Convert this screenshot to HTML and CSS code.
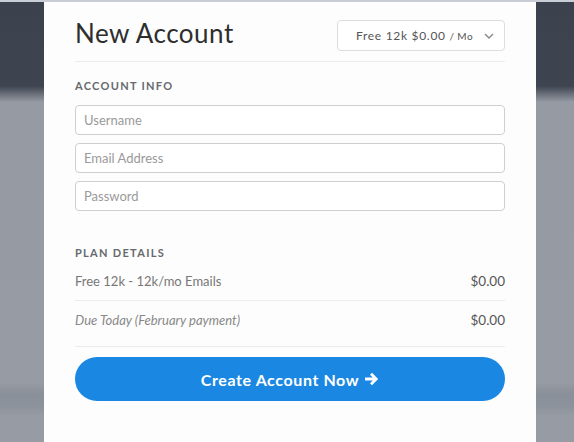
FILE: index.html
```html
<!DOCTYPE html>
<html lang="en">
<head>
    <meta charset="UTF-8">
    <meta name="viewport" content="width=device-width, initial-scale=1.0">
    <title>New Account</title>
    <link rel="stylesheet" href="styles.css">
</head>
<body>
    <div class="backdrop">
        <div class="modal">
            <header class="modal-head">
                <h1>New Account</h1>
                <button class="plan-select">
                    <span class="plan-text">Free 12k $0.00 <small>/ Mo</small></span>
                    <svg class="chevron" width="10" height="6" viewBox="0 0 10 6"><path d="M1 1l4 4 4-4" fill="none" stroke="#888" stroke-width="1.4"/></svg>
                </button>
            </header>

            <section class="section">
                <h2>Account Info</h2>
                <div class="fields">
                    <input type="text" placeholder="Username">
                    <input type="text" placeholder="Email Address">
                    <input type="password" placeholder="Password">
                </div>
            </section>

            <section class="section plan">
                <h2>Plan Details</h2>
                <div class="row">
                    <span>Free 12k - 12k/mo Emails</span>
                    <span class="price">$0.00</span>
                </div>
                <div class="row due">
                    <span class="note">Due Today (February payment)</span>
                    <span class="price">$0.00</span>
                </div>
            </section>

            <button class="create">Create Account Now
                <svg class="arrow" width="15" height="14" viewBox="0 0 15 14"><path d="M1 7h11M7 1.8L12.2 7 7 12.2" fill="none" stroke="#fff" stroke-width="2.8"/></svg>
            </button>
        </div>
    </div>
</body>
</html>
```

FILE: styles.css
```css
:root {
    --blue: #1a87e2;
    --text: #333;
    --muted: #666;
    --line: #ececec;
}

* {
    margin: 0;
    padding: 0;
    box-sizing: border-box;
}

body {
    font-family: Lato, "Open Sans", Arial, sans-serif;
    color: var(--text);
    height: 442px;
    overflow: hidden;
}

.backdrop {
    height: 442px;
    padding: 0 38px 0 44px;
    border-top: 2px solid #c9cdd5;
    background: linear-gradient(to bottom, #3b414d 0, #3e4450 84px, #959aa3 100px, #979ba4 380px, #8a9099 392px, #8d939c 405px, #979ba3 414px);
}

.modal {
    height: 100%;
    background: #fdfdfd;
    padding: 0 31px;
}

.modal-head {
    display: flex;
    justify-content: space-between;
    align-items: center;
    height: 60px;
    padding-top: 8px;
    border-bottom: 1px solid var(--line);
}

h1 {
    font-size: 26px;
    font-weight: 400;
    color: #2e2e2e;
    letter-spacing: 0.5px;
    margin-bottom: 5px;
}

.plan-select {
    display: flex;
    align-items: center;
    gap: 11px;
    width: 168px;
    height: 31px;
    padding: 0 12px 0 18px;
    background: #fff;
    border: 1px solid #ddd;
    border-radius: 4px;
    font-family: inherit;
    font-size: 12px;
    letter-spacing: 0.7px;
    color: #555;
    overflow: hidden;
    white-space: nowrap;
}

.plan-text small {
    font-size: 10px;
    letter-spacing: 0.4px;
}

.chevron {
    flex-shrink: 0;
}

h2 {
    font-size: 11px;
    font-weight: 700;
    letter-spacing: 1.3px;
    text-transform: uppercase;
    color: #666a6e;
    margin-bottom: 13px;
}

.section {
    padding-top: 17px;
}

.fields {
    display: flex;
    flex-direction: column;
    gap: 8px;
}

.fields input {
    height: 30px;
    border: 1px solid #cfcfcf;
    border-radius: 4px;
    background: #fff;
    padding: 0 8px;
    font-family: inherit;
    font-size: 13px;
}

.fields input::placeholder {
    color: #9a9a9a;
}

.plan {
    padding-top: 35px;
}

.plan h2 {
    margin-bottom: 5px;
}

.row {
    display: flex;
    justify-content: space-between;
    align-items: center;
    height: 37px;
    padding-bottom: 2px;
    border-bottom: 1px solid var(--line);
    font-size: 13px;
    color: #777;
}

.row.due {
    height: 46px;
    padding-bottom: 8px;
}

.note {
    font-style: italic;
    color: #888;
}

.price {
    font-size: 13.5px;
    color: #555;
}

.create {
    display: flex;
    align-items: center;
    justify-content: center;
    gap: 5px;
    width: 100%;
    height: 44px;
    margin-top: 10px;
    border: none;
    border-radius: 22px;
    background: var(--blue);
    color: #fff;
    font-family: inherit;
    font-size: 16px;
    font-weight: 700;
    letter-spacing: 0.6px;
}
```
